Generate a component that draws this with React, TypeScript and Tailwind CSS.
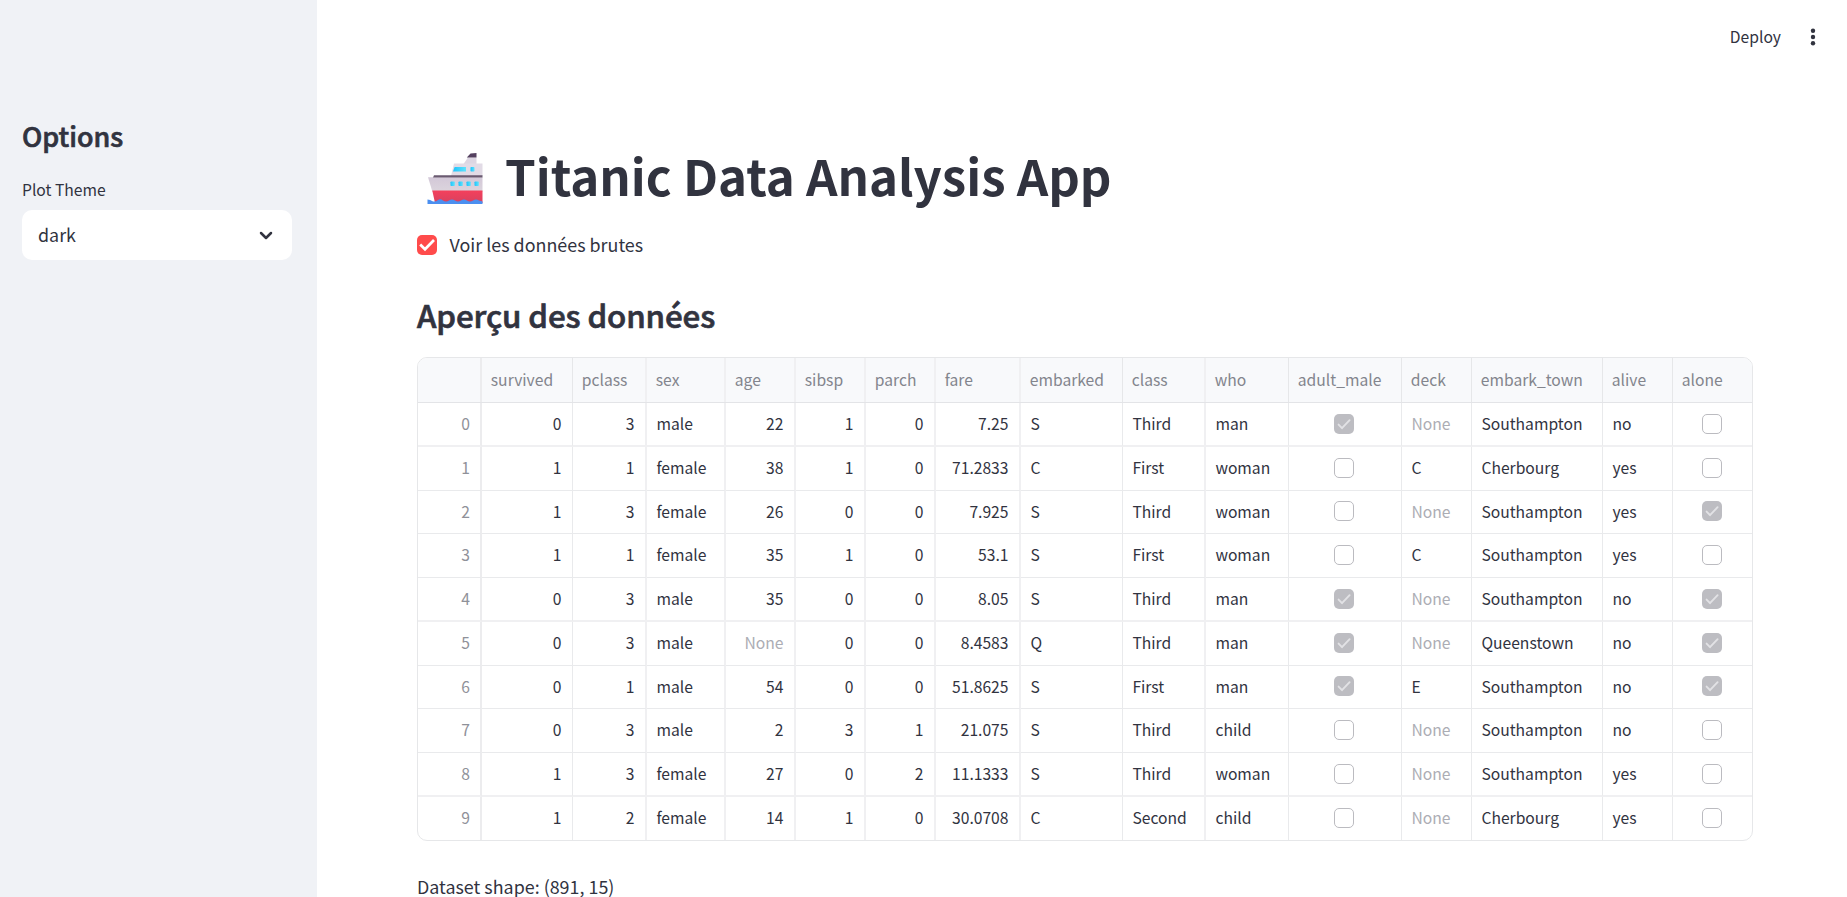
import React from "react";

type Align = "left" | "right" | "center";
type Column = { name: string; width: string; align: Align };
type Cell = string | number | boolean | null;

const columns: Column[] = [
  { name: "survived", width: "w-[91px] border-r", align: "right" },
  { name: "pclass", width: "w-[74px] border-r-2 border-r-[#f0f0f2]", align: "right" },
  { name: "sex", width: "w-[79px] border-r-2 border-r-[#f0f0f2]", align: "left" },
  { name: "age", width: "w-[70px] border-r-2 border-r-[#f0f0f2]", align: "right" },
  { name: "sibsp", width: "w-[70px] border-r-2 border-r-[#f0f0f2]", align: "right" },
  { name: "parch", width: "w-[70px] border-r-2 border-r-[#f0f0f2]", align: "right" },
  { name: "fare", width: "w-[85px] border-r-2 border-r-[#f0f0f2]", align: "right" },
  { name: "embarked", width: "w-[102px] border-r", align: "left" },
  { name: "class", width: "w-[83px] border-r-2 border-r-[#f0f0f2]", align: "left" },
  { name: "who", width: "w-[83px] border-r", align: "left" },
  { name: "adult_male", width: "w-[113px] border-r", align: "center" },
  { name: "deck", width: "w-[70px] border-r", align: "left" },
  { name: "embark_town", width: "w-[131px] border-r", align: "left" },
  { name: "alive", width: "w-[70px] border-r", align: "left" },
  { name: "alone", width: "w-[79px]", align: "center" },
];

const rows: Cell[][] = [
  [0, 3, "male", 22, 1, 0, 7.25, "S", "Third", "man", true, null, "Southampton", "no", false],
  [1, 1, "female", 38, 1, 0, 71.2833, "C", "First", "woman", false, "C", "Cherbourg", "yes", false],
  [1, 3, "female", 26, 0, 0, 7.925, "S", "Third", "woman", false, null, "Southampton", "yes", true],
  [1, 1, "female", 35, 1, 0, 53.1, "S", "First", "woman", false, "C", "Southampton", "yes", false],
  [0, 3, "male", 35, 0, 0, 8.05, "S", "Third", "man", true, null, "Southampton", "no", true],
  [0, 3, "male", null, 0, 0, 8.4583, "Q", "Third", "man", true, null, "Queenstown", "no", true],
  [0, 1, "male", 54, 0, 0, 51.8625, "S", "First", "man", true, "E", "Southampton", "no", true],
  [0, 3, "male", 2, 3, 1, 21.075, "S", "Third", "child", false, null, "Southampton", "no", false],
  [1, 3, "female", 27, 0, 2, 11.1333, "S", "Third", "woman", false, null, "Southampton", "yes", false],
  [1, 2, "female", 14, 1, 0, 30.0708, "C", "Second", "child", false, null, "Cherbourg", "yes", false],
];

const justify: Record<Align, string> = {
  left: "justify-start pl-[9.4px]",
  right: "justify-end pr-[10.5px]",
  center: "justify-center pr-[1.5px]",
};

function rowBorder(index: number) {
  if (index === rows.length - 1) return "border-b-0 pb-[2px]";
  return index % 4 === 0 ? "border-b-2 border-b-[#f0f0f2]" : "border-b border-b-[#e9eaec] pb-px";
}

function TableCheckbox({ checked }: { checked: boolean }) {
  return checked ? (
    <span className="flex size-5 items-center justify-center rounded-[5px] bg-[#bdbdc2]">
      <svg viewBox="0 0 20 20" className="size-5" fill="none" stroke="#e2e2e5" strokeWidth="1.9" strokeLinecap="round" strokeLinejoin="round">
        <path d="M4.600 10.600 8 14.200 15.600 6.200" />
      </svg>
    </span>
  ) : (
    <span className="size-5 rounded-[5px] border border-[#bbbbc0] bg-white" />
  );
}

function CellContent({ value }: { value: Cell }) {
  if (typeof value === "boolean") return <TableCheckbox checked={value} />;
  if (value === null) return <span className="text-[#acadb4]">None</span>;
  return <span>{value}</span>;
}

function Ship() {
  return (
    <svg viewBox="0 0 56 52" className="h-[52px] w-[56px] shrink-0">
      <defs>
        <linearGradient id="hull" x1="0" x2="0" y1="0" y2="1">
          <stop offset="0" stopColor="#d3c8d8" />
          <stop offset="1" stopColor="#dcd5dd" />
        </linearGradient>
        <linearGradient id="keel" x1="0" x2="0" y1="0" y2="1">
          <stop offset="0" stopColor="#f4405c" />
          <stop offset="1" stopColor="#d8415f" />
        </linearGradient>
        <linearGradient id="glass" x1="0" x2="1" y1="0" y2="0">
          <stop offset="0" stopColor="#1fc3fb" />
          <stop offset="1" stopColor="#5fe3fd" />
        </linearGradient>
      </defs>
      <path d="M41 4.500 49.500 4.500V11H36.500Z" fill="#ddd6e2" />
      <path d="M43.500 0.500 49.500 0V4.500H39.800Z" fill="#54405f" />
      <path d="M27 10.500H55.500V23H24Z" fill="#e2dbe6" />
      <path d="M27.600 14H39V18.500H26Z" fill="url(#glass)" />
      <rect x="43.500" y="14" width="4" height="4.500" rx="0.700" fill="url(#glass)" />
      <path d="M1 24.300H55.500V39H5.500Z" fill="url(#hull)" />
      <path d="M7 22.300H55.500V24.400H6Z" fill="#6a5a70" />
      <path d="M5.300 37.500H55.500V50H8Z" fill="url(#keel)" />
      <rect x="23.500" y="28.500" width="4.300" height="4.500" rx="0.700" fill="url(#glass)" />
      <rect x="31.500" y="28.500" width="4.300" height="4.500" rx="0.700" fill="url(#glass)" />
      <rect x="39.500" y="28.500" width="4.300" height="4.500" rx="0.700" fill="url(#glass)" />
      <rect x="47.500" y="28.500" width="4.300" height="4.500" rx="0.700" fill="url(#glass)" />
      <path d="M0.500 46.500Q3.500 46.500 5 48Q8 49.500 11 47Q13.500 45.500 16 47.500Q19 49.500 22 47.500Q25 45.500 28 47.500Q31 49.500 34 47.500Q37 45.500 40 47.500Q43 49.500 46 47.500Q49 45.500 52 47.500L55.500 48.500V51H0.500Z" fill="#4b8ff0" />
    </svg>
  );
}

function Sidebar() {
  return (
    <aside className="flex w-[317px] shrink-0 flex-col bg-[#f0f2f6] pl-[22px] pr-[25px] pt-[116px]">
      <h2 className="text-[26.9px] font-medium leading-[40px] [-webkit-text-stroke:0.7px_#31333f]">Options</h2>
      <label className="mt-[21px] text-[15.67px] leading-[26px]">Plot Theme</label>
      <button className="mt-[7px] flex h-[50px] items-center justify-between rounded-[10px] bg-white pb-px pl-4 pr-[16px] text-[17.9px]">
        <span>dark</span>
        <svg viewBox="0 0 20 20" className="size-5" fill="none" stroke="#31333f" strokeWidth="2.500" strokeLinecap="round" strokeLinejoin="round">
          <path d="M5 8 10 13 15 8" />
        </svg>
      </button>
    </aside>
  );
}

function DataTable() {
  return (
    <div className="mt-[20px] h-[484px] w-[1336px] overflow-hidden rounded-[10px] border border-[#e6e7e9] text-[15.67px]">
      <div className="flex h-[45px] border-b border-[#e3e4e7] bg-[#f8f9fb] text-[#83858d]">
        <div className="w-[64px] shrink-0 border-r-2 border-[#ececee]" />
        {columns.map((c) => (
          <div key={c.name} className={`${c.width} flex shrink-0 items-center border-[#e6e7e9] pl-[8.8px]`}>
            {c.name}
          </div>
        ))}
      </div>
      {rows.map((row, r) => (
        <div key={r} className="flex h-[43.75px] items-stretch">
          <div className={`${rowBorder(r)} flex w-[64px] shrink-0 items-center justify-end border-r-2 border-r-[#ececee] pr-[10px] text-[#8f9199]`}>{r}</div>
          {row.map((value, i) => (
            <div key={i} className={`${columns[i].width} ${justify[columns[i].align]} ${rowBorder(r)} flex shrink-0 items-center border-[#e9eaec]`}>
              <CellContent value={value} />
            </div>
          ))}
        </div>
      ))}
    </div>
  );
}

export default function App() {
  return (
    <div className="flex h-[897px] w-[1847px] overflow-hidden bg-white font-['Noto_Sans_CJK_SC','Open_Sans',sans-serif] text-[#31333f]">
      <Sidebar />
      <div className="flex min-w-0 flex-1 flex-col">
        <header className="flex h-[75px] shrink-0 items-center justify-end gap-[23px] pr-[24px] text-[15.67px]">
          <span className="-mr-px pb-px">Deploy</span>
          <svg viewBox="0 0 20 20" className="mb-px size-5" fill="#31333f">
            <circle cx="10" cy="3.700" r="2.200" />
            <circle cx="10" cy="10" r="2.200" />
            <circle cx="10" cy="16.300" r="2.200" />
          </svg>
        </header>
        <main className="flex flex-col pl-[100px]">
          <h1 className="mt-[67px] flex h-[66px] items-center whitespace-nowrap pl-[9.500px] text-[49.2px] font-bold leading-[66px]">
            <span className="flex pt-[8px]">
              <Ship />
            </span>
            <span className="ml-[22.500px]">Titanic Data Analysis App</span>
          </h1>
          <label className="mt-[22px] flex h-[30px] items-center gap-[12.500px] text-[17.9px]">
            <span className="flex size-5 items-center justify-center rounded-[5px] bg-[#ff4b4b]">
              <svg viewBox="0 0 20 20" className="size-5" fill="none" stroke="#ffffff" strokeWidth="2.700">
                <path d="M3.200 9.500 8 14.300 17 5" />
              </svg>
            </span>
            <span className="pb-px">Voir les données brutes</span>
          </label>
          <h2 className="mt-[32px] text-[31.3px] font-medium leading-[45px] tracking-[-0.1px] [-webkit-text-stroke:0.7px_#31333f]">Aperçu des données</h2>
          <DataTable />
          <p className="mt-[30px] text-[17.9px] leading-[30px]">Dataset shape: (891, 15)</p>
        </main>
      </div>
    </div>
  );
}
